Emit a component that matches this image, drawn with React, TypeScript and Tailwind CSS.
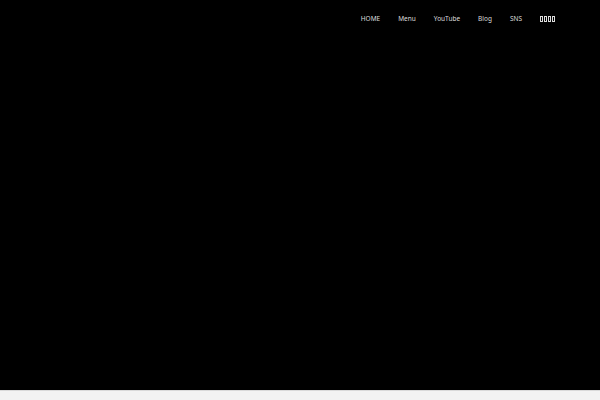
export default function App() {
  const items = ['HOME', 'Menu', 'YouTube', 'Blog', 'SNS']
  return (
    <div className="w-[600px] h-[400px] flex flex-col bg-[#f2f2f2]" style={{ fontFamily: '"Noto Sans", sans-serif' }}>
      <div className="h-[391px] bg-black border-b border-[#d9d9d9]">
        <nav className="flex justify-end items-center h-[38px] pr-[45px] gap-[18px] text-[6.5px] text-[#dcdcdc]">
          {items.map((t) => (
            <span key={t}>{t}</span>
          ))}
          <span className="flex gap-[1px]">
            {[0, 1, 2, 3].map((i) => (
              <span key={i} className="w-[3px] h-[6px] border-[0.5px] border-[#dcdcdc]" />
            ))}
          </span>
        </nav>
      </div>
    </div>
  )
}
